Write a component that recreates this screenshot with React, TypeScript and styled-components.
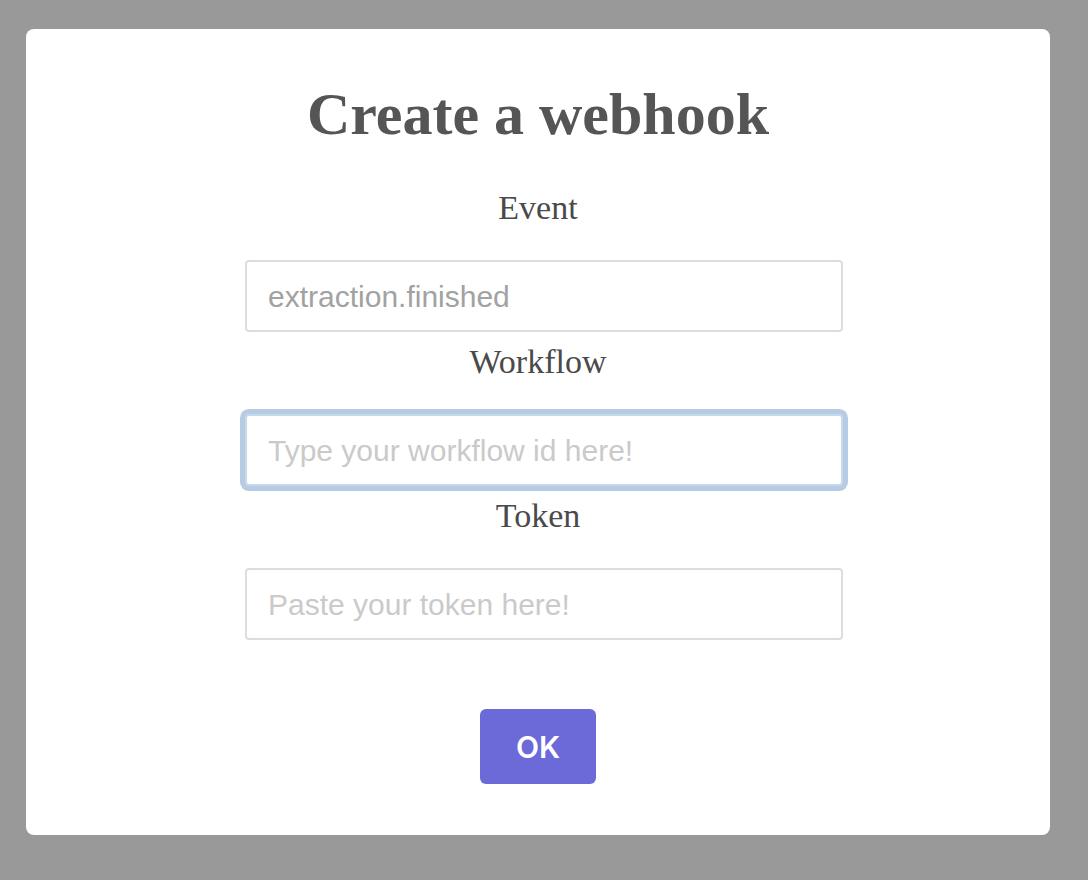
import React from "react";
import styled, { createGlobalStyle } from "styled-components";

const GlobalStyle = createGlobalStyle`
  html, body {
    margin: 0;
    padding: 0;
    background: #999999;
  }
  body {
    font-family: "Liberation Serif", "Times New Roman", serif;
  }
  * { box-sizing: border-box; }
`;

const Backdrop = styled.div`
  width: 1088px;
  height: 880px;
  padding: 29px 38px 45px 26px;
  background: #999999;
`;

const Modal = styled.div`
  width: 1024px;
  height: 806px;
  background: #ffffff;
  border-radius: 8px;
  display: flex;
  flex-direction: column;
  align-items: center;
  padding-top: 51px;
`;

const Title = styled.h1`
  margin: 0;
  font-family: "Liberation Serif", "Times New Roman", serif;
  font-weight: 700;
  font-size: 60px;
  line-height: 69px;
  color: #555555;
`;

const Form = styled.form`
  display: flex;
  flex-direction: column;
  align-items: center;
  margin-top: 39px;
`;

const Label = styled.label<{ $first?: boolean }>`
  display: block;
  font-family: "Liberation Serif", "Times New Roman", serif;
  font-size: 34px;
  line-height: 39px;
  color: #4a4a4a;
  margin-top: ${(p) => (p.$first ? "0" : "10px")};
  margin-bottom: 33px;
`;

const Input = styled.input<{ $focused?: boolean; $dim?: boolean }>`
  width: 598px;
  height: 72px;
  margin-left: 12px;
  padding: 2px 20px 0 21px;
  border: 2px solid ${(p) => (p.$focused ? "#c6d9ea" : "#dddddd")};
  border-radius: 4px;
  outline: none;
  background: #ffffff;
  font-family: "Liberation Sans", Arial, sans-serif;
  font-size: 30px;
  color: #555555;
  box-shadow: ${(p) => (p.$focused ? "0 0 0 5px #b7cbe3" : "none")};
  &::placeholder {
    color: ${(p) => (p.$dim ? "#a2a2a2" : "#cacaca")};
  }
`;

const Button = styled.button`
  margin-top: 69px;
  width: 116px;
  height: 75px;
  border: none;
  border-radius: 6px;
  background: #6c69d9;
  color: #ffffff;
  font-family: Inter, "Liberation Sans", Arial, sans-serif;
  font-weight: 600;
  font-size: 30px;
  cursor: pointer;
`;

export default function App() {
  return (
    <>
      <GlobalStyle />
      <Backdrop>
        <Modal>
          <Title>Create a webhook</Title>
          <Form onSubmit={(e) => e.preventDefault()}>
            <Label $first htmlFor="event">Event</Label>
            <Input id="event" $dim placeholder="extraction.finished" />
            <Label htmlFor="workflow">Workflow</Label>
            <Input id="workflow" $focused placeholder="Type your workflow id here!" />
            <Label htmlFor="token">Token</Label>
            <Input id="token" placeholder="Paste your token here!" />
            <Button type="submit">OK</Button>
          </Form>
        </Modal>
      </Backdrop>
    </>
  );
}
